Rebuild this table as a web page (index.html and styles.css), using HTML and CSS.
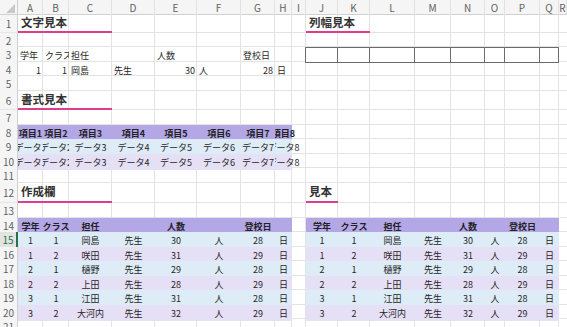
FILE: index.html
```html
<!DOCTYPE html>
<html lang="ja">
<head>
<meta charset="utf-8">
<title>Sheet</title>
<link rel="stylesheet" href="styles.css">
</head>
<body>
<div class="sheet">
  <div class="colhdr">
    <div class="corner"><span class="tri"></span></div>
    <div class="ch">A</div><div class="ch">B</div><div class="ch">C</div><div class="ch">D</div>
    <div class="ch">E</div><div class="ch">F</div><div class="ch">G</div><div class="ch">H</div>
    <div class="ch">I</div><div class="ch">J</div><div class="ch">K</div><div class="ch">L</div>
    <div class="ch">M</div><div class="ch">N</div><div class="ch">O</div><div class="ch">P</div>
    <div class="ch">Q</div><div class="ch">R</div>
  </div>
  <div class="rows">
    <div class="row h18"><div class="rh">1</div><div class="c title spanAC">文字見本</div><div class="c title spanJK">列幅見本</div></div>
    <div class="row h14"><div class="rh">2</div></div>
    <div class="row h15"><div class="rh">3</div>
      <div class="c l">学年</div><div class="c l clip">クラス</div><div class="c l">担任</div>
      <div class="c l cE">人数</div><div class="c l cG">登校日</div>
      <div class="box first cJ"></div><div class="box"></div><div class="box"></div><div class="box"></div>
      <div class="box"></div><div class="box"></div><div class="box"></div><div class="box"></div>
    </div>
    <div class="row h14"><div class="rh">4</div>
      <div class="c r">1</div><div class="c r">1</div><div class="c l">岡島</div><div class="c l">先生</div>
      <div class="c r">30</div><div class="c l">人</div><div class="c r">28</div><div class="c l">日</div>
    </div>
    <div class="row h15"><div class="rh">5</div></div>
    <div class="row h19"><div class="rh">6</div><div class="c title spanAC">書式見本</div></div>
    <div class="row h15"><div class="rh">7</div></div>
    <div class="row h14"><div class="rh">8</div>
      <div class="c ctr clip hd">項目1</div><div class="c ctr clip hd">項目2</div><div class="c ctr clip hd">項目3</div><div class="c ctr clip hd">項目4</div>
      <div class="c ctr clip hd">項目5</div><div class="c ctr clip hd">項目6</div><div class="c ctr clip hd">項目7</div><div class="c ctr clipl hd">項目8</div>
    </div>
    <div class="row h15"><div class="rh">9</div>
      <div class="c ctr clip b1">データ1</div><div class="c ctr clip b1">データ2</div><div class="c ctr clip b1">データ3</div><div class="c ctr clip b1">データ4</div>
      <div class="c ctr clip b1">データ5</div><div class="c ctr clip b1">データ6</div><div class="c ctr clip b1">データ7</div><div class="c ctr clipl b1">データ8</div>
    </div>
    <div class="row h14"><div class="rh">10</div>
      <div class="c ctr clip b2">データ1</div><div class="c ctr clip b2">データ2</div><div class="c ctr clip b2">データ3</div><div class="c ctr clip b2">データ4</div>
      <div class="c ctr clip b2">データ5</div><div class="c ctr clip b2">データ6</div><div class="c ctr clip b2">データ7</div><div class="c ctr clipl b2">データ8</div>
    </div>
    <div class="row h15"><div class="rh">11</div></div>
    <div class="row h20"><div class="rh">12</div><div class="c title spanAC">作成欄</div><div class="c title spanJ">見本</div></div>
    <div class="row h15"><div class="rh">13</div></div>
    <div class="row h14"><div class="rh">14</div>
      <div class="c ctr clip hd">学年</div><div class="c ctr clip hd">クラス</div><div class="c ctr clip hd">担任</div><div class="c ctr clip hd"></div>
      <div class="c ctr clip hd">人数</div><div class="c ctr clip hd"></div><div class="c ctr clip hd">登校日</div><div class="c ctr clip hd"></div>
      <div class="c ctr clip hd cJ">学年</div><div class="c ctr clip hd">クラス</div><div class="c ctr clip hd">担任</div><div class="c ctr clip hd"></div>
      <div class="c ctr clip hd">人数</div><div class="c ctr clip hd"></div><div class="c ctr clip hd">登校日</div><div class="c ctr clip hd"></div>
    </div>
    <div class="row h15"><div class="rh sel">15</div>
      <div class="c ctr b1">1</div><div class="c ctr b1">1</div><div class="c ctr b1">岡島</div><div class="c ctr b1">先生</div>
      <div class="c ctr b1">30</div><div class="c ctr b1">人</div><div class="c ctr b1">28</div><div class="c ctr b1">日</div>
      <div class="c ctr b1 cJ">1</div><div class="c ctr b1">1</div><div class="c ctr b1">岡島</div><div class="c ctr b1">先生</div>
      <div class="c ctr b1">30</div><div class="c ctr b1">人</div><div class="c ctr b1">28</div><div class="c ctr b1">日</div>
    </div>
    <div class="row h14"><div class="rh">16</div>
      <div class="c ctr b2">1</div><div class="c ctr b2">2</div><div class="c ctr b2">咲田</div><div class="c ctr b2">先生</div>
      <div class="c ctr b2">31</div><div class="c ctr b2">人</div><div class="c ctr b2">29</div><div class="c ctr b2">日</div>
      <div class="c ctr b2 cJ">1</div><div class="c ctr b2">2</div><div class="c ctr b2">咲田</div><div class="c ctr b2">先生</div>
      <div class="c ctr b2">31</div><div class="c ctr b2">人</div><div class="c ctr b2">29</div><div class="c ctr b2">日</div>
    </div>
    <div class="row h15"><div class="rh">17</div>
      <div class="c ctr b1">2</div><div class="c ctr b1">1</div><div class="c ctr b1">樋野</div><div class="c ctr b1">先生</div>
      <div class="c ctr b1">29</div><div class="c ctr b1">人</div><div class="c ctr b1">28</div><div class="c ctr b1">日</div>
      <div class="c ctr b1 cJ">2</div><div class="c ctr b1">1</div><div class="c ctr b1">樋野</div><div class="c ctr b1">先生</div>
      <div class="c ctr b1">29</div><div class="c ctr b1">人</div><div class="c ctr b1">28</div><div class="c ctr b1">日</div>
    </div>
    <div class="row h14"><div class="rh">18</div>
      <div class="c ctr b2">2</div><div class="c ctr b2">2</div><div class="c ctr b2">上田</div><div class="c ctr b2">先生</div>
      <div class="c ctr b2">28</div><div class="c ctr b2">人</div><div class="c ctr b2">29</div><div class="c ctr b2">日</div>
      <div class="c ctr b2 cJ">2</div><div class="c ctr b2">2</div><div class="c ctr b2">上田</div><div class="c ctr b2">先生</div>
      <div class="c ctr b2">28</div><div class="c ctr b2">人</div><div class="c ctr b2">29</div><div class="c ctr b2">日</div>
    </div>
    <div class="row h15"><div class="rh">19</div>
      <div class="c ctr b1">3</div><div class="c ctr b1">1</div><div class="c ctr b1">江田</div><div class="c ctr b1">先生</div>
      <div class="c ctr b1">31</div><div class="c ctr b1">人</div><div class="c ctr b1">28</div><div class="c ctr b1">日</div>
      <div class="c ctr b1 cJ">3</div><div class="c ctr b1">1</div><div class="c ctr b1">江田</div><div class="c ctr b1">先生</div>
      <div class="c ctr b1">31</div><div class="c ctr b1">人</div><div class="c ctr b1">28</div><div class="c ctr b1">日</div>
    </div>
    <div class="row h14"><div class="rh">20</div>
      <div class="c ctr b2">3</div><div class="c ctr b2">2</div><div class="c ctr b2">大河内</div><div class="c ctr b2">先生</div>
      <div class="c ctr b2">32</div><div class="c ctr b2">人</div><div class="c ctr b2">29</div><div class="c ctr b2">日</div>
      <div class="c ctr b2 cJ">3</div><div class="c ctr b2">2</div><div class="c ctr b2">大河内</div><div class="c ctr b2">先生</div>
      <div class="c ctr b2">32</div><div class="c ctr b2">人</div><div class="c ctr b2">29</div><div class="c ctr b2">日</div>
    </div>
    <div class="row h15"><div class="rh">21</div></div>
  </div>
</div>
</body>
</html>
```

FILE: styles.css
```css
* { box-sizing: border-box; margin: 0; padding: 0; }

body {
  margin: 0;
  width: 567px;
  height: 327px;
  overflow: hidden;
  background: #fff;
  font-family: "Noto Sans CJK JP", "Noto Sans", sans-serif;
  color: #262626;
}

.sheet {
  --cols: 18px 25px 26px 43px 43px 42px 44px 34px 17px 14px 32px 32px 45px 36px 34px 20px 35px 19px 1fr;
  --grid: #e3e3e3;
  width: 567px;
  height: 327px;
  overflow: hidden;
}

.colhdr, .row {
  display: grid;
  grid-template-columns: var(--cols);
}

.colhdr {
  height: 15px;
  background: #f5f5f5;
  border-bottom: 1px solid #d0d0d0;
}

.ch {
  font-size: 10px;
  color: #616161;
  display: flex;
  align-items: center;
  justify-content: center;
  border-right: 1px solid #e2e2e2;
}

.corner {
  display: flex;
  align-items: flex-end;
  justify-content: flex-end;
  padding: 0 2px 2px 0;
  border-right: 1px solid #d0d0d0;
}

.tri {
  width: 0;
  height: 0;
  border-left: 9px solid transparent;
  border-bottom: 9px solid #c8c8c8;
}

.rows {
  background-image:
    linear-gradient(var(--grid), var(--grid)), linear-gradient(var(--grid), var(--grid)),
    linear-gradient(var(--grid), var(--grid)), linear-gradient(var(--grid), var(--grid)),
    linear-gradient(var(--grid), var(--grid)), linear-gradient(var(--grid), var(--grid)),
    linear-gradient(var(--grid), var(--grid)), linear-gradient(var(--grid), var(--grid)),
    linear-gradient(var(--grid), var(--grid)), linear-gradient(var(--grid), var(--grid)),
    linear-gradient(var(--grid), var(--grid)), linear-gradient(var(--grid), var(--grid)),
    linear-gradient(var(--grid), var(--grid)), linear-gradient(var(--grid), var(--grid)),
    linear-gradient(var(--grid), var(--grid)), linear-gradient(var(--grid), var(--grid)),
    linear-gradient(var(--grid), var(--grid));
  background-size: 1px 100%;
  background-repeat: no-repeat;
  background-position:
    42px 0, 68px 0, 111px 0, 154px 0, 196px 0, 240px 0, 274px 0, 291px 0,
    305px 0, 337px 0, 369px 0, 414px 0, 450px 0, 484px 0, 504px 0, 539px 0, 558px 0;
  height: 312px;
}

.row {
  background: linear-gradient(var(--grid), var(--grid)) 0 100% / 100% 1px no-repeat;
}

.h14 { height: 14px; }
.h15 { height: 15px; }
.h18 { height: 18px; }
.h19 { height: 19px; }
.h20 { height: 20px; }

.rh {
  background: #f5f5f5;
  border-right: 1px solid #d0d0d0;
  border-bottom: 1px solid #e6e6e6;
  font-size: 10px;
  color: #616161;
  display: flex;
  align-items: center;
  justify-content: center;
}

.rh.sel {
  background: #e3e3e3;
  color: #217346;
  border-right: 2px solid #217346;
}

.c {
  font-size: 9px;
  display: flex;
  align-items: center;
  white-space: nowrap;
  min-width: 0;
  line-height: 1;
}

.l { justify-content: flex-start; padding-left: 2px; }
.r { justify-content: flex-end; padding-right: 2px; }
.ctr { justify-content: center; }
.clip { overflow: hidden; }
.clipl { clip-path: inset(0 -60px 0 0); }

.hd { background: #b4a7e6; font-weight: bold; color: #222; }
.b1 { background: #ddecf7; }
.b2 { background: #e6e0f7; }

.title {
  font-size: 11.5px;
  font-weight: bold;
  color: #333;
  padding-left: 3px;
  border-bottom: 2px solid #dc3d8e;
}

.spanAC { grid-column: 2 / span 3; }
.spanJK { grid-column: 11 / span 2; }
.spanJ { grid-column: 11 / span 1; }
.cE { grid-column-start: 6; }
.cG { grid-column-start: 8; }
.cJ { grid-column-start: 11; }

.box {
  border-top: 1px solid #6b6b6b;
  border-bottom: 1px solid #6b6b6b;
  border-right: 1px solid #6b6b6b;
  background: #fff;
}

.box.first {
  border-left: 1px solid #6b6b6b;
  margin-left: -1px;
}
```
